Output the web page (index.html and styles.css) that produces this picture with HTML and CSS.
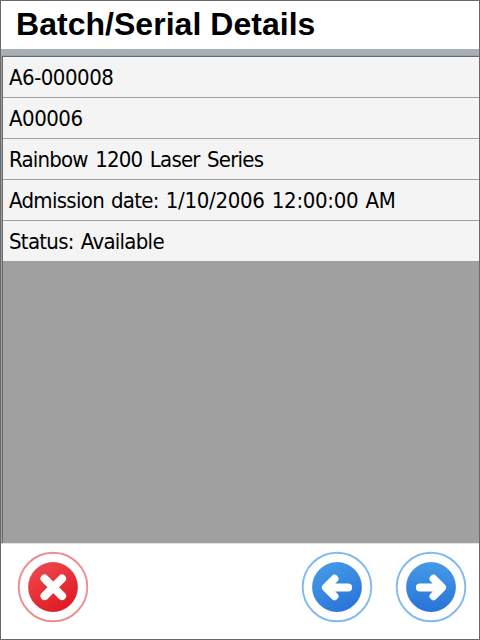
FILE: index.html
```
<!DOCTYPE html>
<html lang="en">
<head>
<meta charset="utf-8">
<title>Batch/Serial Details</title>
<link rel="stylesheet" href="styles.css">
</head>
<body>
<div class="window">
  <header class="header"><h1 class="title">Batch/Serial Details</h1></header>
  <main class="panel">
    <ul class="list">
      <li class="row"><span class="code">A6-000008</span></li>
      <li class="row"><span class="code">A00006</span></li>
      <li class="row"><span class="product">Rainbow 1200 Laser Series</span></li>
      <li class="row"><span class="label">Admission date: </span><span class="date">1/10/2006 12:00:00 AM</span></li>
      <li class="row"><span class="status">Status: Available</span></li>
    </ul>
  </main>
  <footer class="footer">
    <button class="btn" aria-label="Cancel">
      <svg width="72" height="72" viewBox="0 0 72 72">
        <defs><linearGradient id="red" x1="0.2" y1="0" x2="0.8" y2="1"><stop offset="0" stop-color="#ee4950"/><stop offset="1" stop-color="#df171f"/></linearGradient></defs>
        <circle cx="36" cy="36" r="34.3" fill="#fff" stroke="#ee8c90" stroke-width="1.9"/>
        <circle cx="36" cy="36" r="24.9" fill="url(#red)"/>
        <path d="M27.6 27.6L45 45M45 27.6L27.6 45" fill="none" stroke="#fff" stroke-width="8.2" stroke-linecap="round"/>
      </svg>
    </button>
    <div class="nav">
      <button class="btn" aria-label="Back">
        <svg width="72" height="72" viewBox="0 0 72 72">
          <defs><linearGradient id="blue-back" x1="0.25" y1="0" x2="0.75" y2="1"><stop offset="0" stop-color="#459be6"/><stop offset="1" stop-color="#2873d9"/></linearGradient></defs>
          <circle cx="36" cy="36" r="34.3" fill="#fff" stroke="#82b9ef" stroke-width="1.9"/>
          <circle cx="36" cy="36" r="24.9" fill="url(#blue-back)"/>
          <path d="M33.5 27.7L24.8 36.5L33.5 45.3M25.5 36.5H47.2" fill="none" stroke="#fff" stroke-width="7.8" stroke-linecap="round" stroke-linejoin="round"/>
        </svg>
      </button>
      <button class="btn" aria-label="Next">
        <svg width="72" height="72" viewBox="0 0 72 72">
          <defs><linearGradient id="blue-next" x1="0.5" y1="0" x2="0.5" y2="1"><stop offset="0" stop-color="#459be6"/><stop offset="1" stop-color="#2873d9"/></linearGradient></defs>
          <circle cx="36" cy="36" r="34.3" fill="#fff" stroke="#82b9ef" stroke-width="1.9"/>
          <circle cx="36" cy="36" r="24.9" fill="url(#blue-next)"/>
          <path d="M38.5 27.7L47.2 36.5L38.5 45.3M46.5 36.5H24.8" fill="none" stroke="#fff" stroke-width="7.8" stroke-linecap="round" stroke-linejoin="round"/>
        </svg>
      </button>
    </div>
  </footer>
</div>
</body>
</html>
```
FILE: styles.css
```
* { box-sizing: border-box; }
body { margin: 0; background: #fff; }
.window {
  width: 480px;
  height: 640px;
  border: 1px solid #69696b;
  background: #fff;
  display: flex;
  flex-direction: column;
}
.header {
  height: 54px;
  flex: none;
  padding-left: 15px;
  border-bottom: 6px solid #a5b0b9;
}
.title {
  margin: 0;
  font: bold 32px/46px "Liberation Sans", Arial, sans-serif;
  letter-spacing: 0.03px;
  white-space: nowrap;
  color: #000;
}
.panel {
  height: 489px;
  flex: none;
  border-top: 1px solid #a0a0a0;
  border-left: 1px solid #a0a0a0;
  border-bottom: 1px solid #e3e3e3;
  background: #a0a0a0;
}
.list {
  margin: 0;
  padding: 0;
  height: 487px;
  list-style: none;
  border-top: 1px solid #69696b;
  border-left: 1px solid #69696b;
}
.row {
  height: 41px;
  padding-left: 6px;
  border-bottom: 1px solid #a0a0a0;
  background: #f4f4f4;
  color: #000;
  font: 22px/41px "DejaVu Sans Condensed", "DejaVu Sans", Tahoma, sans-serif;
  font-stretch: condensed;
  white-space: nowrap;
}
.code { letter-spacing: -0.5px; }
.product { letter-spacing: -0.8px; word-spacing: 2px; }
.label { letter-spacing: -0.7px; word-spacing: 1.4px; }
.date { letter-spacing: -0.3px; word-spacing: 1.3px; }
.status { letter-spacing: -0.72px; word-spacing: 1.6px; }
.footer {
  flex: 1;
  display: flex;
  justify-content: space-between;
  align-items: flex-start;
  padding: 7px 12px 0 16px;
}
.nav { display: flex; gap: 22px; }
.btn {
  width: 72px;
  height: 72px;
  padding: 0;
  border: 0;
  background: none;
}
.btn svg { display: block; }
```
